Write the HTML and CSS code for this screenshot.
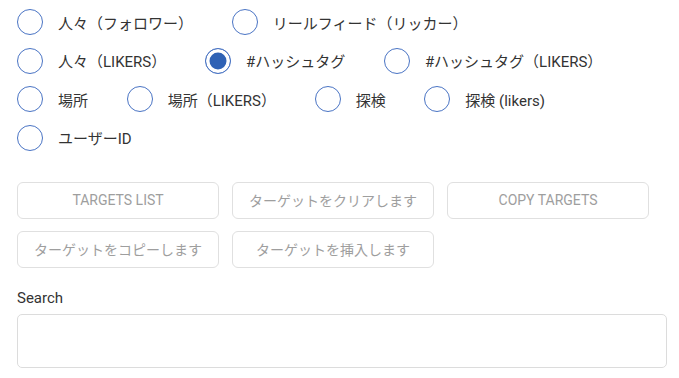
FILE: index.html
```html
<!DOCTYPE html>
<html lang="ja">
<head>
  <meta charset="UTF-8">
  <meta name="viewport" content="width=device-width, initial-scale=1.0">
  <title>Targets</title>
  <link rel="stylesheet" href="styles.css">
</head>
<body>
  <div class="panel">
    <!-- target type -->
    <div class="options">
      <div class="option-row">
        <label class="option"><input type="radio" name="type"><span>人々（フォロワー）</span></label>
        <label class="option"><input type="radio" name="type"><span>リールフィード（リッカー）</span></label>
      </div>
      <div class="option-row">
        <label class="option"><input type="radio" name="type"><span>人々（LIKERS）</span></label>
        <label class="option"><input type="radio" name="type" checked><span>#ハッシュタグ</span></label>
        <label class="option"><input type="radio" name="type"><span>#ハッシュタグ（LIKERS）</span></label>
      </div>
      <div class="option-row">
        <label class="option"><input type="radio" name="type"><span>場所</span></label>
        <label class="option"><input type="radio" name="type"><span>場所（LIKERS）</span></label>
        <label class="option"><input type="radio" name="type"><span>探検</span></label>
        <label class="option"><input type="radio" name="type"><span>探検 (likers)</span></label>
      </div>
      <div class="option-row">
        <label class="option"><input type="radio" name="type"><span>ユーザーID</span></label>
      </div>
    </div>

    <div class="actions">
      <button type="button" class="upper">Targets list</button>
      <button type="button">ターゲットをクリアします</button>
      <button type="button" class="upper">Copy targets</button>
      <button type="button">ターゲットをコピーします</button>
      <button type="button">ターゲットを挿入します</button>
    </div>

    <div class="search">
      <label for="searchInput">Search</label>
      <input type="text" id="searchInput">
    </div>
  </div>
</body>
</html>
```

FILE: styles.css
```css
/* Global Styles */
body {
  font-family: Roboto, "Noto Sans CJK JP", sans-serif;
  background-color: #fff;
  color: #333;
  margin: 0;
}

.panel {
  padding: 9px 12px 0 17px;
}

.options {
  display: flex;
  flex-direction: column;
  gap: 12.5px;
}

.option-row {
  display: flex;
  align-items: center;
  height: 26px;
}

.option {
  display: flex;
  align-items: center;
  gap: 15px;
  margin-right: 38.7px;
  font-size: 15px;
  cursor: pointer;
}

.option input[type="radio"] {
  appearance: none;
  -webkit-appearance: none;
  width: 26px;
  height: 26px;
  margin: 0;
  border: 1.5px solid #4a74c4;
  border-radius: 50%;
  background-color: #fff;
  flex-shrink: 0;
}

.option input[type="radio"]:checked {
  background-color: #2f62b5;
  box-shadow: inset 0 0 0 3.5px #fff;
}

.actions {
  display: grid;
  grid-template-columns: repeat(3, 202px);
  column-gap: 13px;
  row-gap: 12px;
  margin-top: 31px;
}

button {
  height: 37px;
  padding: 0 8px;
  font-family: Roboto, "Noto Sans CJK JP", sans-serif;
  font-size: 14px;
  color: #9e9e9e;
  background-color: #fff;
  border: 1px solid #e0e0e0;
  border-radius: 6px;
  cursor: pointer;
}

button.upper {
  text-transform: uppercase;
}

.search {
  margin-top: 21px;
}

.search label {
  display: block;
  font-size: 15px;
  line-height: 18px;
  color: #333;
  margin-bottom: 7px;
}

.search input[type="text"] {
  display: block;
  box-sizing: border-box;
  width: 650px;
  height: 54px;
  border: 1px solid #dcdcdc;
  border-radius: 5px;
  padding: 0 12px;
  font-size: 15px;
}
```
